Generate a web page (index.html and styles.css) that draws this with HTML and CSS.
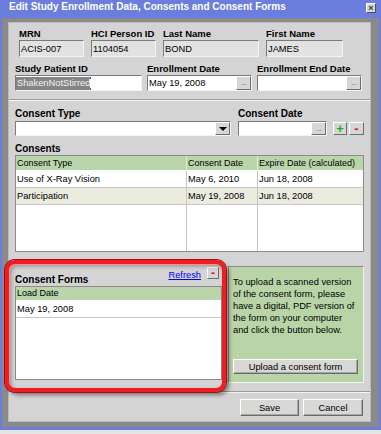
FILE: index.html
```html
<!DOCTYPE html>
<html lang="en">
<head>
    <meta charset="UTF-8">
    <meta name="viewport" content="width=device-width, initial-scale=1.0">
    <title>Edit Study Enrollment Data, Consents and Consent Forms</title>
    <link rel="stylesheet" href="styles.css">
</head>
<body>
    <div class="window">
        <div class="titlebar">
            <span class="title">Edit Study Enrollment Data, Consents and Consent Forms</span>
            <button type="button" class="close">&times;</button>
        </div>

        <div class="frame">
            <div class="panel">
                <div class="row row-ids">
                    <div class="field f-mrn">
                        <label>MRN</label>
                        <input type="text" class="box ro" value="ACIS-007" readonly>
                    </div>
                    <div class="field f-hci">
                        <label>HCI Person ID</label>
                        <input type="text" class="box ro" value="1104054" readonly>
                    </div>
                    <div class="field f-last">
                        <label>Last Name</label>
                        <input type="text" class="box ro" value="BOND" readonly>
                    </div>
                    <div class="field f-first">
                        <label>First Name</label>
                        <input type="text" class="box ro" value="JAMES" readonly>
                    </div>
                </div>

                <div class="row row-study">
                    <div class="field f-study">
                        <label>Study Patient ID</label>
                        <div class="box study"><span class="sel">ShakenNotStirred</span><span class="caret"></span></div>
                    </div>
                    <div class="field f-date">
                        <label>Enrollment Date</label>
                        <div class="box date">
                            <input type="text" value="May 19, 2008">
                            <button type="button" class="dots">...</button>
                        </div>
                    </div>
                    <div class="field f-date">
                        <label>Enrollment End Date</label>
                        <div class="box date">
                            <input type="text" value="">
                            <button type="button" class="dots">...</button>
                        </div>
                    </div>
                </div>

                <div class="sep"></div>

                <div class="row row-consent">
                    <div class="field f-type">
                        <label class="section">Consent Type</label>
                        <div class="box combo">
                            <span class="combo-value"></span>
                            <button type="button" class="arrow"><span class="tri"></span></button>
                        </div>
                    </div>
                    <div class="field f-cdate">
                        <label class="section">Consent Date</label>
                        <div class="box date short">
                            <input type="text" value="">
                            <button type="button" class="dots">...</button>
                        </div>
                    </div>
                    <div class="addrem">
                        <button type="button" class="mini plus">+</button>
                        <button type="button" class="mini minus">-</button>
                    </div>
                </div>

                <h3 class="section">Consents</h3>
                <div class="grid consents">
                    <div class="th">Consent Type</div>
                    <div class="th">Consent Date</div>
                    <div class="th last">Expire Date (calculated)</div>

                    <div class="td">Use of X-Ray Vision</div>
                    <div class="td">May 6, 2010</div>
                    <div class="td last">Jun 18, 2008</div>

                    <div class="td alt">Participation</div>
                    <div class="td alt">May 19, 2008</div>
                    <div class="td alt last">Jun 18, 2008</div>

                    <div class="td fill"></div>
                    <div class="td fill"></div>
                    <div class="td fill last"></div>
                </div>

                <div class="forms-row">
                    <div class="forms">
                        <div class="forms-head">
                            <h3 class="section">Consent Forms</h3>
                            <a href="#" class="refresh">Refresh</a>
                            <button type="button" class="mini minus small">-</button>
                        </div>
                        <div class="grid forms-grid">
                            <div class="th last">Load Date</div>
                            <div class="td last">May 19, 2008</div>
                            <div class="td fill last"></div>
                        </div>
                    </div>
                    <div class="info">
                        <p>To upload a scanned version<br>of the consent form, please<br>have a digital, PDF version of<br>the form on your computer<br>and click the button below.</p>
                        <button type="button" class="btn upload">Upload a consent form</button>
                    </div>
                </div>

                <div class="sep"></div>

                <div class="actions">
                    <button type="button" class="btn save">Save</button>
                    <button type="button" class="btn cancel">Cancel</button>
                </div>
            </div>
        </div>
    </div>

    <!-- red highlight drawn over the consent forms block -->
    <div class="callout"></div>
</body>
</html>
```

FILE: styles.css
```css
* {
    box-sizing: border-box;
}
body {
    margin: 0;
    background: #e4e4e4;
    font-family: "Liberation Sans", Arial, sans-serif;
    font-size: 9.3px;
    color: #000;
}
button, input {
    font: inherit;
    color: inherit;
    margin: 0;
}

/* window chrome */
.window {
    width: 381px;
    height: 430px;
    background: #6b7ddd;
    padding: 0 2px 3px;
    display: flex;
    flex-direction: column;
}
.titlebar {
    height: 18px;
    display: flex;
    align-items: flex-start;
    justify-content: space-between;
    padding: 1px 3px 0 7px;
    color: #fff;
    font-weight: bold;
    font-size: 10px;
    line-height: 12px;
}
.close {
    width: 10px;
    height: 10px;
    margin-top: 2px;
    padding: 0;
    background: #d8d8d8;
    border: 1px solid;
    border-color: #fff #505050 #505050 #fff;
    font-size: 9px;
    line-height: 7px;
    color: #333;
}
.frame {
    flex: 1;
    background: #8a8a8a;
    padding: 4px 8px 5px 6px;
}
.panel {
    height: 400px;
    background: #d4d4d4;
    border: 1px solid #bcbcbc;
    padding: 0 6px;
    display: flex;
    flex-direction: column;
}

/* fields */
.row {
    display: flex;
}
.row-ids {
    gap: 7px;
    margin: 5px 0 0 4px;
}
.row-study {
    gap: 5px;
    margin-top: 6px;
}
.row-consent {
    margin-top: 7px;
}
.field {
    display: flex;
    flex-direction: column;
}
.field label {
    display: block;
    font-weight: bold;
    font-size: 9.5px;
    line-height: 11px;
    margin-bottom: 1px;
    white-space: nowrap;
}
.section {
    margin: 0;
    font-weight: bold;
    font-size: 10px;
    line-height: 11px;
}
.row-consent .field label {
    font-size: 10px;
    margin-bottom: 2px;
}
.f-mrn, .f-hci { width: 65px; }
.f-last { width: 96px; }
.f-first { width: 77px; }
.f-study { width: 127px; }
.f-date { width: 105px; }
.f-type { width: 216px; margin-right: 7px; }
.f-cdate { width: 89px; margin-right: 6px; }

.box {
    height: 17px;
    border: 1px solid;
    border-color: #7a7a7a #f4f4f4 #f4f4f4 #7a7a7a;
    background: #fff;
    padding: 0 1px;
}
.ro {
    background: #e2e2e2;
    outline: none;
}
.row-study .box {
    height: 16px;
}
.study {
    padding: 1px 0 0;
    display: flex;
}
.sel {
    flex-shrink: 0;
    height: 13px;
    line-height: 13px;
    padding: 0 0 0 1px;
    background: #858585;
    color: #f2f2f2;
    white-space: nowrap;
}
.caret {
    flex-shrink: 0;
    width: 1px;
    height: 13px;
    border-top: 2px solid #3b55d6;
    border-bottom: 2px solid #3b55d6;
}
.date {
    display: flex;
    padding: 0 0 0 1px;
}
.date input {
    flex: 1;
    min-width: 0;
    border: none;
    padding: 0;
    background: transparent;
    outline: none;
}
.dots, .arrow, .mini {
    padding: 0;
    background: #d6d6d6;
    border: 1px solid;
    border-color: #fff #6e6e6e #6e6e6e #fff;
}
.dots {
    width: 15px;
    height: 100%;
    font-size: 8px;
    line-height: 8px;
    color: #707070;
    letter-spacing: -0.5px;
}
.row-consent .box {
    height: 15px;
}
.combo {
    display: flex;
    padding: 0;
}
.combo-value {
    flex: 1;
}
.arrow {
    width: 15px;
    height: 100%;
    display: flex;
    align-items: center;
    justify-content: center;
}
.tri {
    width: 0;
    height: 0;
    border-left: 4px solid transparent;
    border-right: 4px solid transparent;
    border-top: 4px solid #000;
}
.addrem {
    display: flex;
    align-self: flex-end;
    gap: 2px;
    margin-bottom: 1px;
}
.mini {
    height: 13px;
    font-weight: bold;
    font-size: 13px;
    line-height: 9px;
}
.plus {
    width: 14px;
    color: #16b316;
}
.minus {
    width: 15px;
    color: #e01010;
}
.sep {
    height: 2px;
    margin: 8px -6px 0;
    border-top: 1px solid #9c9c9c;
    border-bottom: 1px solid #f4f4f4;
}

/* tables */
h3.section {
    margin-top: 7px;
    margin-bottom: 1px;
}
.grid {
    display: grid;
    background: #fff;
    border: 1px solid #8c8c8c;
}
.consents {
    height: 97px;
    grid-template-columns: 171px 71px 1fr;
    grid-template-rows: 15px 17px 17px 1fr;
}
.th {
    background: #b9d5a9;
    border-right: 1px solid #e2ead8;
    border-bottom: 1px solid #fff;
    padding-left: 1px;
    font-size: 9px;
    line-height: 14px;
    white-space: nowrap;
}
.td {
    border-right: 1px solid #c4c4c4;
    border-bottom: 1px solid #c8c8c8;
    padding-left: 1px;
    line-height: 16px;
    white-space: nowrap;
}
.alt {
    background: #ebebdf;
}
.fill {
    border-bottom: none;
}
.last {
    border-right: none;
}

/* consent forms + info */
.forms-row {
    display: flex;
    gap: 6px;
    margin-top: 14px;
    height: 117px;
}
.forms {
    width: 207px;
    display: flex;
    flex-direction: column;
}
.forms-head {
    height: 20px;
    display: flex;
    align-items: flex-start;
}
.forms-head .section {
    margin: 8px 0 0;
}
.refresh {
    margin: 4px 0 0 auto;
    color: #0000ee;
    line-height: 11px;
}
.mini.small {
    width: 12px;
    height: 12px;
    margin: 1px 3px 0 6px;
    font-size: 12px;
}
.forms-grid {
    height: 94px;
    grid-template-columns: 1fr;
    grid-template-rows: 14px 17px 1fr;
}
.forms-grid .th {
    line-height: 13px;
}
.info {
    flex: 1;
    background: #b9d5a8;
    border: 1px solid;
    border-color: #8a8a8a #eef4ea #eef4ea #8a8a8a;
    padding: 9px 5px 8px 4px;
    display: flex;
    flex-direction: column;
}
.info p {
    margin: 0;
    line-height: 12px;
}
.btn {
    background: #d8d8d6;
    border: 1px solid;
    border-color: #fff #6a6a6a #6a6a6a #fff;
    box-shadow: inset -1px -1px 0 #a8a8a8;
    padding: 0;
    text-align: center;
}
.upload {
    margin-top: auto;
    height: 15px;
    line-height: 12px;
}
.actions {
    display: flex;
    justify-content: flex-end;
    gap: 4px;
    margin-top: 6px;
    padding-right: 1px;
}
.save, .cancel {
    height: 17px;
}
.save { width: 59px; }
.cancel { width: 60px; }

/* red highlight over the consent forms block */
.callout {
    position: absolute;
    left: 5px;
    top: 260px;
    width: 221px;
    height: 132px;
    border: 4px solid #ee1d23;
    border-radius: 10px;
    box-shadow: 0 0 0 1px #a50d10, 3px 3px 4px rgba(0, 0, 0, 0.45),
        inset 1px 1px 0 #ff8d8d, inset 2px 2px 4px rgba(0, 0, 0, 0.35);
}
```
